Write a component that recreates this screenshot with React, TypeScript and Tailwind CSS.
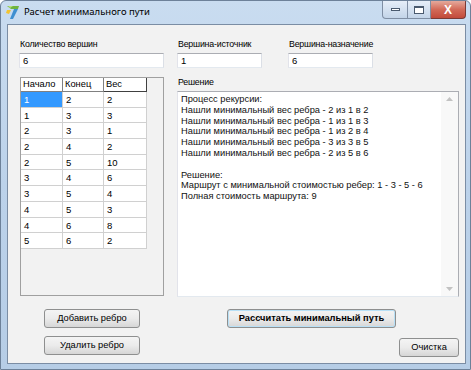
const edges = [
  [1, 2, 2],
  [1, 3, 3],
  [2, 3, 1],
  [2, 4, 2],
  [2, 5, 10],
  [3, 4, 6],
  [3, 5, 4],
  [4, 5, 3],
  [4, 6, 8],
  [5, 6, 2],
];

const log = [
  'Процесс рекурсии:',
  'Нашли минимальный вес ребра - 2 из 1 в 2',
  'Нашли минимальный вес ребра - 1 из 1 в 3',
  'Нашли минимальный вес ребра - 1 из 2 в 4',
  'Нашли минимальный вес ребра - 3 из 3 в 5',
  'Нашли минимальный вес ребра - 2 из 5 в 6',
  '',
  'Решение:',
  'Маршрут с минимальной стоимостью ребер: 1 - 3 - 5 - 6',
  'Полная стоимость маршрута: 9',
];

function Label({ text, className = '' }: { text: string; className?: string }) {
  return (
    <div className={`h-[15px] leading-[15px] text-[8.8px] tracking-[-0.2px] whitespace-nowrap ${className}`}>{text}</div>
  );
}

function Field({ value, className = '' }: { value: string; className?: string }) {
  return (
    <div
      className={`h-[15px] bg-white border border-[#abadb3] border-l-[#e2e3ea] border-r-[#dbdfe6] border-b-[#e3e9ef] pl-[3px] text-[9.5px] leading-[13px] ${className}`}
    >
      {value}
    </div>
  );
}

function Button({ label, className = '' }: { label: string; className?: string }) {
  return (
    <div
      className={`flex items-center justify-center whitespace-nowrap rounded-[3px] border border-[#8e8f8f] bg-gradient-to-b from-[#f4f4f4] via-[#ebebeb] to-[#d6d6d6] text-[9.3px] text-black ${className}`}
    >
      {label}
    </div>
  );
}

function AppIcon() {
  return (
    <svg width="16" height="16" viewBox="0 0 16 16">
      <path d="M2 2 L14 2 L13 5 L6 5 Z" fill="#6fb43f" />
      <path d="M9 5 L13 5 L8 15 L5 15 Z" fill="#3f8fd0" />
      <path d="M2 6 L6 6 L4 10 L1 9 Z" fill="#f3c431" />
      <path d="M3 2 L8 2 L5 4 Z" fill="#b7e07a" />
    </svg>
  );
}

export default function App() {
  return (
    <div
      className="w-[471px] h-[370px] overflow-hidden bg-gradient-to-b from-[#c9dcf0] via-[#bcd2ea] to-[#b6cde6] border border-[#6d8199] rounded-t-[6px] flex flex-col"
      style={{ fontFamily: '"Liberation Sans", Arial, sans-serif' }}
    >
      {/* title bar */}
      <div className="h-[22px] flex items-start shrink-0">
        <div className="ml-[4px] mt-[3px]">
          <AppIcon />
        </div>
        <div
          className="ml-[3px] mt-[4px] text-[9.5px] leading-[14px] text-black"
          style={{ fontFamily: '"Noto Sans", "Open Sans", sans-serif' }}
        >
          Расчет минимального пути
        </div>
        <div className="ml-auto mr-[4px] flex">
          <div className="w-[26px] h-[18px] border border-[#7f8ea3] border-t-0 rounded-bl-[4px] bg-gradient-to-b from-[#e6eef8] to-[#c3d4e8] flex items-center justify-center">
            <div className="w-[9px] h-[3px] border border-[#4a5a6e] bg-white" />
          </div>
          <div className="w-[23px] h-[18px] border border-[#7f8ea3] border-t-0 border-l-0 bg-gradient-to-b from-[#e6eef8] to-[#c3d4e8] flex items-center justify-center">
            <div className="w-[10px] h-[8px] border border-[#4a5a6e] border-t-2 bg-white" />
          </div>
          <div className="w-[35px] h-[18px] border border-[#7a3a35] border-t-0 border-l-0 rounded-br-[4px] bg-gradient-to-b from-[#e4a99c] via-[#d26a58] to-[#c24a3a] flex items-center justify-center text-white text-[12px] font-bold leading-none">
            X
          </div>
        </div>
      </div>

      {/* client area */}
      <div className="ml-[6px] mt-[1px] w-[459px] h-[340px] border border-[#7b8da4] bg-[#f2f2f2] pl-[11px] pt-[12px] text-[9.5px] text-black">
        <div className="flex">
          {/* left column */}
          <div className="w-[145px] flex flex-col">
            <Label text="Количество вершин" className="pl-[1px]" />
            <Field value="6" className="mt-[1px]" />
            <div className="mt-[9px] ml-[1px] w-[144px] h-[219px] border border-[#a0a0a0] bg-[#f2f2f2]">
              <div className="flex h-[14px]">
                {['Начало', 'Конец', 'Вес'].map((h, i) => (
                  <div
                    key={h}
                    className={`${i === 2 ? 'w-[43px] border-[#404040]' : i === 0 ? 'w-[42px] border-[#808080]' : 'w-[41px] border-[#808080]'} bg-white border-r border-b pl-[2px] leading-[13px] text-[9.3px]`}
                  >
                    {h}
                  </div>
                ))}
              </div>
              {edges.map((row, r) => (
                <div key={r} className="flex h-[15.7px]">
                  {row.map((v, c) => (
                    <div
                      key={c}
                      className={`${c === 0 ? 'w-[42px]' : c === 1 ? 'w-[41px]' : 'w-[43px]'} ${r === 0 && c === 0 ? 'bg-[#3399ff] text-white' : 'bg-white'} border-r border-b border-[#d0d0d0] pl-[3px] leading-[15px]`}
                    >
                      {v}
                    </div>
                  ))}
                </div>
              ))}
            </div>
          </div>

          {/* right column */}
          <div className="ml-[13px] flex flex-col">
            <div className="flex">
              <div className="w-[85px]">
                <Label text="Вершина-источник" className="pl-[1px]" />
                <Field value="1" className="mt-[1px]" />
              </div>
              <div className="w-[85px] ml-[26px]">
                <Label text="Вершина-назначение" className="pl-[1px]" />
                <Field value="6" className="mt-[1px]" />
              </div>
            </div>
            <Label text="Решение" className="mt-[7px] pl-[1px]" />
            <div className="mt-[1px] w-[282px] h-[206px] border border-[#abadb3] border-b-[#e3e9ef] border-l-[#e2e3ea] bg-white flex">
              <div className="flex-1 pl-[3px] pt-[2px] text-[9.3px] leading-[10.8px] text-[#111]">
                {log.map((l, i) => (
                  <div key={i} className="h-[10.8px] whitespace-pre">
                    {l}
                  </div>
                ))}
              </div>
              <div className="w-[17px] bg-[#f8f8f8] flex flex-col justify-between items-center py-[5px]">
                <svg width="7" height="4" viewBox="0 0 7 4">
                  <path d="M0 4 L3.5 0 L7 4 Z" fill="#c2c2c2" />
                </svg>
                <svg width="7" height="4" viewBox="0 0 7 4">
                  <path d="M0 0 L3.5 4 L7 0 Z" fill="#c2c2c2" />
                </svg>
              </div>
            </div>
          </div>
        </div>

        {/* buttons */}
        <div className="flex mt-[12px]">
          <div className="ml-[25px] flex flex-col gap-[8px]">
            <Button label="Добавить ребро" className="w-[96px] h-[19px]" />
            <Button label="Удалить ребро" className="w-[96px] h-[19px]" />
          </div>
          <Button
            label="Рассчитать минимальный путь"
            className="ml-[87px] w-[169px] h-[19px] font-bold border-[#3c7fb1] shadow-[inset_0_0_0_1px_#b8e0f6]"
          />
          <Button label="Очистка" className="ml-[3px] mt-[29px] w-[60px] h-[19px]" />
        </div>
      </div>
    </div>
  );
}
